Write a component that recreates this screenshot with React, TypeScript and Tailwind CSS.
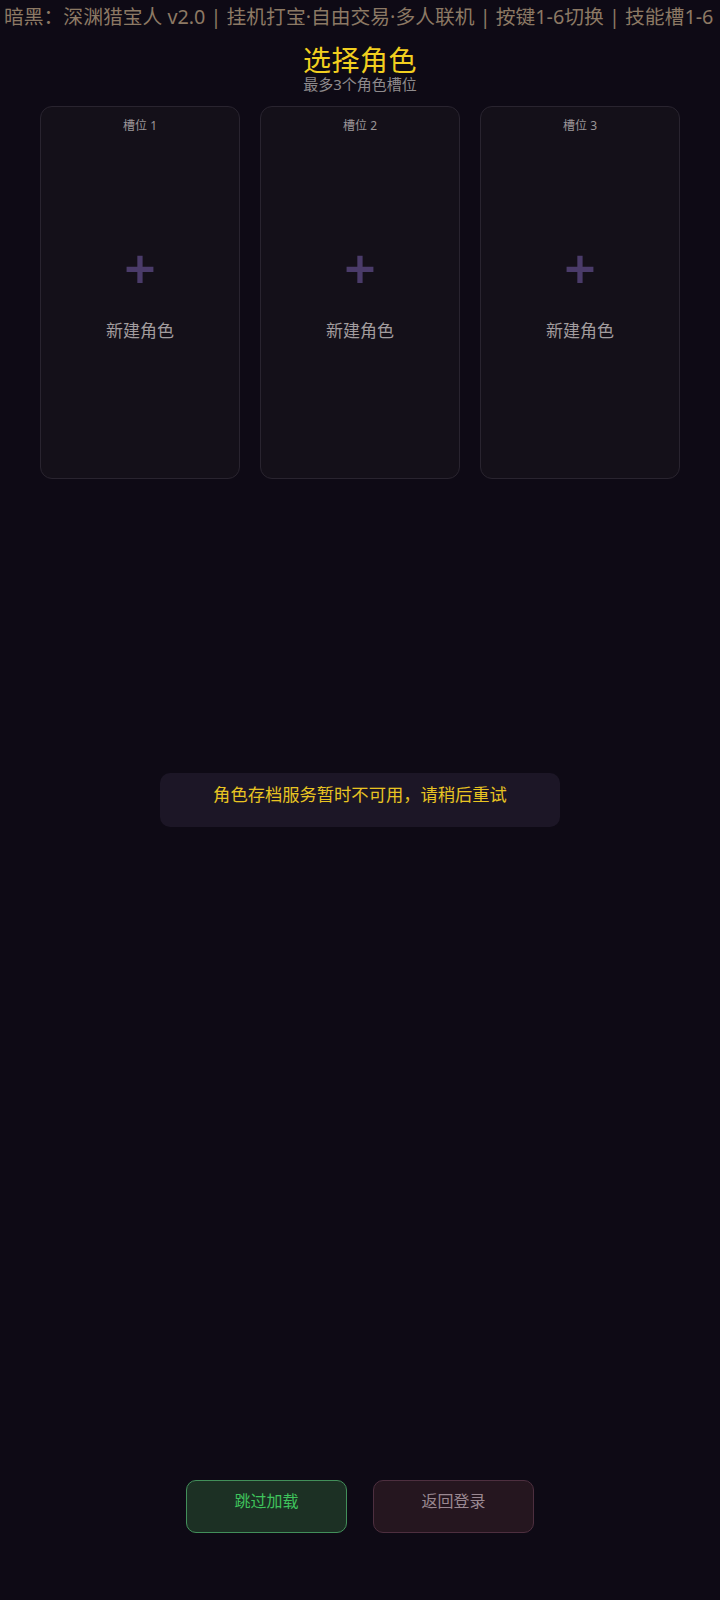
const slots = [1, 2, 3];

export default function App() {
    return (
        <div
            className="min-h-[1600px] w-[720px] flex flex-col bg-[#0e0a15] overflow-hidden"
            style={{ fontFamily: '"Noto Sans", "Noto Sans CJK SC", sans-serif' }}
        >
            {/* top banner */}
            <div className="h-[34px] flex items-center pl-[4px] whitespace-nowrap overflow-hidden text-[19.8px] text-[#8c7964]">
                暗黑：深渊猎宝人 v2.0 | 挂机打宝·自由交易·多人联机 | 按键1-6切换 | 技能槽1-6
            </div>

            <div className="flex flex-col items-center">
                <h1 className="mt-[12px] text-[28px] leading-[28px] tracking-[0.5px] text-[#f2cf1f]">选择角色</h1>
                <p className="mt-[1px] text-[15px] leading-[18px] text-[#8e8a8c]">最多3个角色槽位</p>
            </div>

            {/* slots */}
            <div className="mt-[13px] px-[40px] grid grid-cols-3 gap-[20px]">
                {slots.map(n => (
                    <div
                        key={n}
                        className="relative h-[373px] rounded-[12px] border border-[#29242f] bg-[#141019] flex flex-col items-center justify-center"
                    >
                        <span className="absolute top-[10px] left-0 right-0 text-center text-[12px] leading-[18px] text-[#9b9597]">
                            槽位 {n}
                        </span>
                        <div className="text-[56px] leading-[48px] font-semibold text-[#4a3b69]">+</div>
                        <div className="mt-[28px] text-[17px] leading-[24px] text-[#a29c9e]">新建角色</div>
                    </div>
                ))}
            </div>

            {/* error */}
            <div className="mt-[294px] mx-auto w-[400px] h-[54px] pt-[8px] rounded-[10px] bg-[#1c1626] text-center text-[17.3px] leading-[27px] text-[#e8c422]">
                角色存档服务暂时不可用，请稍后重试
            </div>

            <div className="flex-1" />

            {/* bottom buttons */}
            <div className="flex justify-center gap-[26px] pb-[67px]">
                <button className="w-[161px] h-[53px] pt-[9px] flex justify-center items-start rounded-[10px] border border-[#428f5a] bg-[#1c3024] text-[16px] leading-[22px] text-[#3fc35c]">
                    跳过加载
                </button>
                <button className="w-[161px] h-[53px] pt-[9px] flex justify-center items-start rounded-[10px] border border-[#4d2f3f] bg-[#25161f] text-[16px] leading-[22px] text-[#9a8891]">
                    返回登录
                </button>
            </div>
        </div>
    );
}
